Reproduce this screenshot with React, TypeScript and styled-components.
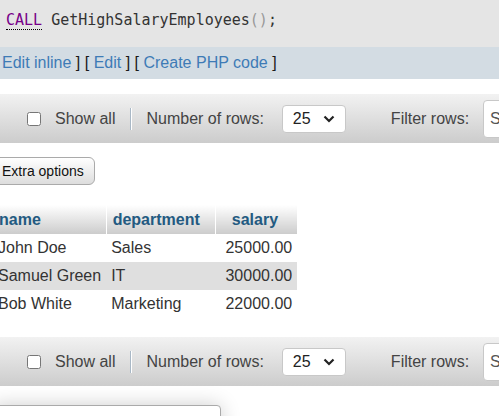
import styled, { createGlobalStyle } from 'styled-components';

const rows = [
    { name: 'John Doe', department: 'Sales', salary: '25000.00' },
    { name: 'Samuel Green', department: 'IT', salary: '30000.00' },
    { name: 'Bob White', department: 'Marketing', salary: '22000.00' },
];

const Toolbar = () => (
    <StToolbar>
        <StCheck type="checkbox" />
        <StLabel>Show all</StLabel>
        <StSeparator />
        <StLabel>Number of rows:</StLabel>
        <StSelect>
            <span>25</span>
            <svg width="12" height="8" viewBox="0 0 12 8">
                <path d="M1.5 1.5 L6 6 L10.5 1.5" fill="none" stroke="#222" strokeWidth="2.2" />
            </svg>
        </StSelect>
        <StFilterLabel>Filter rows:</StFilterLabel>
        <StFilterInput placeholder="Search this table" />
    </StToolbar>
);

const App = () => {
    return (
        <StPage>
            <GlobalStyle />
            <StSql>
                <StKeyword>CALL</StKeyword> GetHighSalaryEmployees<StPunct>()</StPunct>;
            </StSql>
            <StLinks>
                <StLink>Edit inline</StLink> <StBracket>]</StBracket> <StBracket>[</StBracket> <StLink>Edit</StLink> <StBracket>]</StBracket> <StBracket>[</StBracket> <StLink>Create PHP code</StLink> <StBracket>]</StBracket>
            </StLinks>
            <StContent>
                <Toolbar />
                <StButton>Extra options</StButton>
                <StTable>
                    <thead>
                        <tr>
                            <StTh $width={111}>name</StTh>
                            <StTh $width={109}>department</StTh>
                            <StTh $width={82} $center>salary</StTh>
                        </tr>
                    </thead>
                    <tbody>
                        {rows.map((r, i) => (
                            <StTr key={r.name} $odd={i % 2 === 1}>
                                <StTd>{r.name}</StTd>
                                <StTd>{r.department}</StTd>
                                <StTd $right>{r.salary}</StTd>
                            </StTr>
                        ))}
                    </tbody>
                </StTable>
                <Toolbar />
                <StPanel />
            </StContent>
        </StPage>
    );
};

export default App;

const GlobalStyle = createGlobalStyle`
    body {
        margin : 0;
        overflow : hidden;
        background : #fff;
        font-family : 'Liberation Sans', Arial, sans-serif;
    }
`

const StPage = styled.div`
    width : 499px;
    height : 416px;
    overflow : hidden;
`

const StSql = styled.div`
    height : 47px;
    box-sizing : border-box;
    padding : 11px 0 0 6px;
    background : #e5e5e5;
    font-family : 'DejaVu Sans Mono', monospace;
    font-size : 15px;
    line-height : 18px;
    color : #333;
`

const StKeyword = styled.span`
    color : #770088;
    border-bottom : 1px dotted #000;
`

const StPunct = styled.span`
    color : #999;
`

const StLinks = styled.div`
    height : 32px;
    box-sizing : border-box;
    padding : 7px 0 0 2px;
    background : #d3dce3;
    font-size : 16px;
    line-height : 18px;
    white-space : nowrap;
`

const StLink = styled.a`
    color : #3e7bb6;
    cursor : pointer;
`

const StBracket = styled.span`
    color : #1a1a1a;
`

const StContent = styled.div`
    margin-left : -7px;
    padding-top : 15px;
    width : 600px;
`

const StToolbar = styled.div`
    height : 49px;
    display : flex;
    align-items : center;
    padding-left : 34px;
    background : linear-gradient(#f2f2f2, #cccccc);
    font-size : 16px;
    color : #444;
    white-space : nowrap;
    & > * {
        flex-shrink : 0;
    }
`

const StCheck = styled.input`
    width : 14px;
    height : 14px;
    margin : 0 14px 0 0;
`

const StLabel = styled.span`
    line-height : 18px;
`

const StSeparator = styled.div`
    width : 1px;
    height : 22px;
    margin : 0 14px 0 15px;
    background : #a9b8c6;
    border-right : 1px solid #fff;
`

const StSelect = styled.div`
    width : 64px;
    height : 28px;
    box-sizing : border-box;
    margin-left : 18px;
    padding : 0 10px;
    display : flex;
    align-items : center;
    justify-content : space-between;
    background : #fff;
    border : 1px solid #c8c8c8;
    border-radius : 4px;
    color : #222;
`

const StFilterLabel = styled.span`
    margin-left : 45px;
    line-height : 18px;
`

const StFilterInput = styled.input`
    margin-left : 14px;
    width : 150px;
    height : 38px;
    box-sizing : border-box;
    padding : 0 6px;
    border : 1px solid #c8c8c8;
    border-radius : 4px;
    font-family : 'Liberation Sans', Arial, sans-serif;
    font-size : 16px;
    &::placeholder {
        color : #555;
    }
`

const StButton = styled.button`
    display : block;
    margin-top : 14px;
    height : 28px;
    padding : 0 10px 0 8px;
    background : linear-gradient(#ffffff, #dddddd);
    border : 1px solid #aaa;
    border-radius : 6px;
    font-family : 'Liberation Sans', Arial, sans-serif;
    font-size : 14px;
    color : #111;
`

const StTable = styled.table`
    margin-top : 20px;
    margin-bottom : 19px;
    border-collapse : collapse;
    table-layout : fixed;
    font-size : 16px;
`

const StTh = styled.th<{ $width: number; $center?: boolean }>`
    width : ${(p) => p.$width}px;
    box-sizing : border-box;
    height : 29px;
    padding : 0 5px 0 6px;
    text-align : ${(p) => (p.$center ? 'center' : 'left')};
    background : linear-gradient(#ffffff, #cccccc);
    border-right : 1px solid #fff;
    color : #235a81;
    font-weight : bold;
    &:last-child {
        border-right : none;
        padding : 0 6px 0 3px;
    }
`

const StTr = styled.tr<{ $odd: boolean }>`
    height : 28px;
    background : ${(p) => (p.$odd ? '#dfdfdf' : '#fff')};
`

const StTd = styled.td<{ $right?: boolean }>`
    padding : 0 5px;
    color : #333;
    white-space : nowrap;
    text-align : ${(p) => (p.$right ? 'right' : 'left')};
`

const StPanel = styled.div`
    margin-top : 19px;
    width : 226px;
    height : 40px;
    background : #fff;
    border : 1px solid #aaa;
    border-radius : 0 4px 0 0;
    box-shadow : 0 0 20px rgba(0, 0, 0, 0.2);
`
